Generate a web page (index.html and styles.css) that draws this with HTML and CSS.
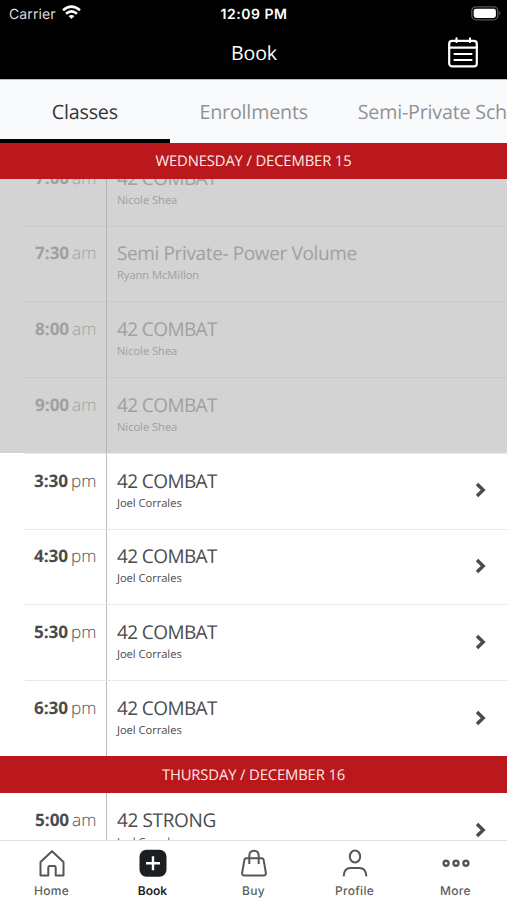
FILE: index.html
```html
<!DOCTYPE html>
<html lang="en">
<head>
<meta charset="utf-8">
<title>Book</title>
<link rel="stylesheet" href="styles.css">
</head>
<body>
<div class="app">
  <header class="header">
    <div class="status">
      <div class="carrier"><span>Carrier</span>
        <svg class="wifi" width="19" height="15" viewBox="0 0 19 15" fill="none" stroke="#fff" stroke-width="2.5"><path d="M1 5.3Q9.5-2.1 18 5.3M4 8.7Q9.5 4 15 8.7"/><path d="M9.5 14 6.6 11Q9.5 8.8 12.4 11Z" fill="#fff" stroke="none"/></svg>
      </div>
      <div class="clock">12:09 PM</div>
      <svg class="battery" width="30" height="15" viewBox="0 0 30 15"><rect x=".8" y=".8" width="26" height="13" rx="4" fill="none" stroke="#555" stroke-width="1.3"/><rect x="2.7" y="2.7" width="22.2" height="9.2" rx="2.3" fill="#fff"/><path d="M28.2 5.2Q30.4 7.3 28.2 9.4Z" fill="#666"/></svg>
    </div>
    <div class="nav">
      <h1 class="title">Book</h1>
      <svg class="calendar" width="30" height="31" viewBox="0 0 30 31" fill="none" stroke="#fff" stroke-width="2.2" stroke-linecap="round"><rect x="1.2" y="3.8" width="27.6" height="25.6" rx="3"/><path d="M1 10.6H29M8.5 1.4V5M22 1.4V5M6.5 17H23.5M6.5 23H23.5"/></svg>
    </div>
  </header>
  <nav class="tabs">
    <div class="tab tab-active">Classes</div>
    <div class="tab">Enrollments</div>
    <div class="tab tab-wide">Semi-Private Schedule</div>
  </nav>
  <h2 class="day">WEDNESDAY / DECEMBER 15</h2>
  <main class="list">
    <div class="rows rows-scrolled">
      <div class="row past"><div class="time"><b>7:00</b>am</div><div class="info"><div class="name caps">42 COMBAT</div><div class="coach">Nicole Shea</div></div></div>
      <div class="row past"><div class="time"><b>7:30</b>am</div><div class="info"><div class="name">Semi Private- Power Volume</div><div class="coach">Ryann McMillon</div></div></div>
      <div class="row past"><div class="time"><b>8:00</b>am</div><div class="info"><div class="name caps">42 COMBAT</div><div class="coach">Nicole Shea</div></div></div>
      <div class="row past"><div class="time"><b>9:00</b>am</div><div class="info"><div class="name caps">42 COMBAT</div><div class="coach">Nicole Shea</div></div></div>
      <div class="row"><div class="time"><b>3:30</b>pm</div><div class="info"><div class="name caps">42 COMBAT</div><div class="coach">Joel Corrales</div></div><svg class="chevron" viewBox="0 0 11 16"><path d="M2 2 8.2 8 2 14"/></svg></div>
      <div class="row"><div class="time"><b>4:30</b>pm</div><div class="info"><div class="name caps">42 COMBAT</div><div class="coach">Joel Corrales</div></div><svg class="chevron" viewBox="0 0 11 16"><path d="M2 2 8.2 8 2 14"/></svg></div>
      <div class="row"><div class="time"><b>5:30</b>pm</div><div class="info"><div class="name caps">42 COMBAT</div><div class="coach">Joel Corrales</div></div><svg class="chevron" viewBox="0 0 11 16"><path d="M2 2 8.2 8 2 14"/></svg></div>
      <div class="row"><div class="time"><b>6:30</b>pm</div><div class="info"><div class="name caps">42 COMBAT</div><div class="coach">Joel Corrales</div></div><svg class="chevron" viewBox="0 0 11 16"><path d="M2 2 8.2 8 2 14"/></svg></div>
    </div>
    <h2 class="day">THURSDAY / DECEMBER 16</h2>
    <div class="rows">
      <div class="row"><div class="time"><b>5:00</b>am</div><div class="info"><div class="name">42 STRONG</div><div class="coach">Joel Corrales</div></div><svg class="chevron" viewBox="0 0 11 16"><path d="M2 2 8.2 8 2 14"/></svg></div>
    </div>
  </main>
  <footer class="tabbar">
    <div class="item"><svg class="icon" viewBox="0 0 28 28"><path d="M2.5 26.5V13L14 2.2 25.5 13V26.5H17.7V18.5Q17.7 17.1 16.3 17.1H11.7Q10.3 17.1 10.3 18.5V26.5Z"/></svg><span>Home</span></div>
    <div class="item item-active"><svg class="icon" viewBox="0 0 28 28"><rect x=".5" y=".7" width="27" height="27" rx="7" fill="#1c1f22" stroke="none"/><path d="M14 7.2V21.2M7 14.2H21" stroke="#fff" stroke-width="2.4"/></svg><span>Book</span></div>
    <div class="item"><svg class="icon" viewBox="0 0 28 28"><path d="M6.3 9.3H21.7Q23.3 9.3 23.6 10.8L25.8 23.5Q26.2 26.6 23.4 26.6H4.6Q1.8 26.6 2.2 23.5L4.4 10.8Q4.7 9.3 6.3 9.3ZM9.3 15V7Q9.3 1.8 14 1.8T18.7 7V15"/></svg><span>Buy</span></div>
    <div class="item"><svg class="icon" viewBox="0 0 28 28"><ellipse cx="14" cy="7.5" rx="5.2" ry="6"/><path d="M2.6 27.4C3 21.8 5.5 19.1 9.5 19.1H18.5C22.5 19.1 25 21.8 25.4 27.4"/></svg><span>Profile</span></div>
    <div class="item"><svg class="icon icon-bold" viewBox="0 0 28 28"><circle cx="4.1" cy="14.2" r="2.5"/><circle cx="14" cy="14.2" r="2.5"/><circle cx="23.9" cy="14.2" r="2.5"/></svg><span>More</span></div>
  </footer>
</div>
</body>
</html>
```
FILE: styles.css
```css
* { box-sizing: border-box; }
body { margin: 0; background: #fff; font-family: "Open Sans", sans-serif; color: #4b4b4d; text-rendering: geometricPrecision; }
.app { width: 507px; height: 900px; display: flex; flex-direction: column; overflow: hidden; }
.header { height: 79px; flex: none; background: #000; color: #fff; }
.status { height: 27px; padding: 0 6px 0 9px; display: grid; grid-template-columns: 1fr auto 1fr; align-items: center; font-family: Inter, sans-serif; }
.carrier { display: flex; align-items: center; gap: 6px; font-size: 14px; color: #ddd; letter-spacing: .1px; padding-top: 1px; }
.wifi { margin-top: -3px; }
.clock { font-size: 14px; font-weight: 600; letter-spacing: .5px; margin-right: 2px; padding-top: 1px; }
.battery { justify-self: end; margin-top: -1px; }
.nav { height: 52px; padding: 0 29px 0 0; display: grid; grid-template-columns: 1fr auto 1fr; align-items: center; }
.title { grid-column: 2; margin: -1px 0 0 30px; font-size: 19.5px; font-weight: 400; letter-spacing: -.1px; }
.calendar { justify-self: end; margin-top: -2px; }
.tabs { height: 63.5px; flex: none; display: flex; background: #f9fafc; border-top: 1px solid #bbb; }
.tab { width: 168px; flex: none; padding-bottom: 0; display: flex; align-items: center; justify-content: center; font-size: 19.7px; letter-spacing: -.2px; color: #919296; white-space: nowrap; }
.tab-active { width: 169.7px; color: #333; border-bottom: 4px solid #000; padding-top: 4px; }
.tab-wide { justify-content: flex-start; padding-left: 20px; width: 230px; }
.day { margin: 0; height: 36.6px; flex: none; display: flex; align-items: center; justify-content: center; background: #ba181c; color: #ffe9e6; font-size: 14.8px; font-weight: 400; letter-spacing: -.13px; padding-top: 1px; }
.list { flex: 1; min-height: 0; overflow: hidden; }
.rows-scrolled { margin-top: -29.2px; }
.row { height: 75.75px; display: flex; position: relative; }
.row + .row::before { content: ""; position: absolute; left: 25px; right: 0; top: -.1px; height: 1px; background: #e8e8e8; }
.time { width: 107.2px; flex: none; padding: 14.6px 9.8px 0 0; border-right: 1px solid #bcbcbc; text-align: right; font-size: 17.2px; line-height: 28px; font-weight: 300; }
.time b { font-weight: 700; margin-right: 3px; letter-spacing: -.1px; }
.info { flex: 1; padding: 13.7px 0 0 9.8px; }
.name { font-size: 19px; line-height: 28px; white-space: nowrap; letter-spacing: -.37px; }
.caps { letter-spacing: -.6px; }
.coach { font-size: 11.2px; line-height: 16px; letter-spacing: -.05px; padding-top: 1px; }
.chevron { width: 11px; height: 16px; margin: 29.5px 21px 0 0; fill: none; stroke: #4b4b4d; stroke-width: 3.4; }
.past { background: #d3d3d3; color: #a0a0a0; }
.past .time { border-color: #b4b4b4; }
.past + .past::before { background: #c8c8c8; }
.tabbar { height: 60px; flex: none; display: flex; border-top: 1px solid #dedfe0; background: #fff; padding: 0 1px; }
.item { flex: 1; display: flex; flex-direction: column; align-items: center; padding-top: 8px; font-family: Inter, sans-serif; font-size: 12px; line-height: 16px; font-weight: 500; letter-spacing: .3px; color: #5b5e61; }
.item-active { color: #1c1f22; font-weight: 600; letter-spacing: 0; }
.icon { width: 28px; height: 28px; margin-bottom: 6px; fill: none; stroke: #54575a; stroke-width: 2; stroke-linejoin: round; stroke-linecap: butt; }
.icon-bold { stroke-width: 2.4; }
```
